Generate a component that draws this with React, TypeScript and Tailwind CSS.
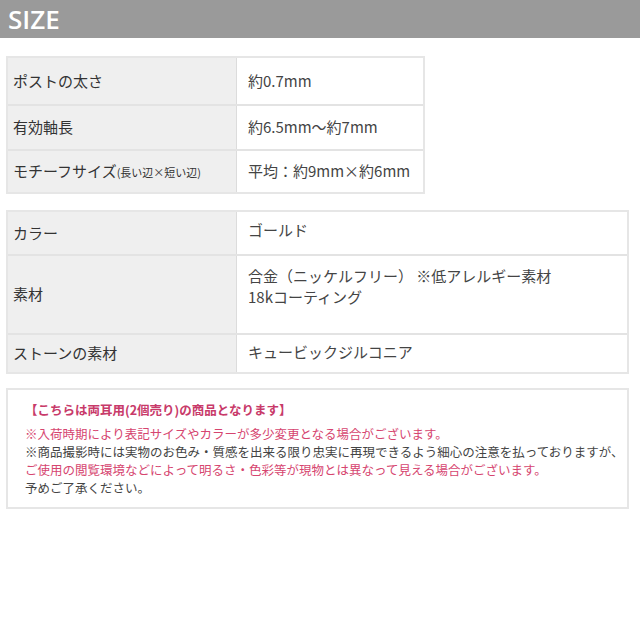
const jp = { fontFamily: '"Noto Sans CJK JP", "Noto Sans", sans-serif' };

type Row = { label: React.ReactNode; value: React.ReactNode; h: string };

function Table({ rows, width }: { rows: Row[]; width: string }) {
  return (
    <div className={`${width} border-2 border-[#e6e6e6]`}>
      {rows.map((r, i) => (
        <div key={i} className={`flex ${r.h} ${i > 0 ? "border-t-2 border-[#e3e3e3]" : ""}`}>
          <div className="w-[229px] shrink-0 bg-[#efefef] border-r border-[#dcdcdc] flex items-center pl-[5px] text-[15px] text-[#333]">
            {r.label}
          </div>
          <div className="flex-1 bg-white flex items-center pl-[11px] text-[15px] text-[#444]">{r.value}</div>
        </div>
      ))}
    </div>
  );
}

export default function App() {
  const t1: Row[] = [
    { label: "ポストの太さ", value: "約0.7mm", h: "h-[46px]" },
    { label: "有効軸長", value: "約6.5mm～約7mm", h: "h-[45px]" },
    {
      label: (
        <span>
          モチーフサイズ<span className="text-[11px]">(長い辺×短い辺)</span>
        </span>
      ),
      value: "平均：約9mm×約6mm",
      h: "h-[43px]",
    },
  ];
  const t2: Row[] = [
    { label: "カラー", value: <span className="-mt-[5px]">ゴールド</span>, h: "h-[42px]" },
    {
      label: "素材",
      value: (
        <div className="leading-[21px] -mt-[18px]">
          <div>合金（ニッケルフリー） ※低アレルギー素材</div>
          <div>18kコーティング</div>
        </div>
      ),
      h: "h-[79px]",
    },
    { label: "ストーンの素材", value: <span className="-mt-[2px]">キュービックジルコニア</span>, h: "h-[39px]" },
  ];
  return (
    <div className="w-[640px] h-[640px] bg-white" style={jp}>
      <div className="h-[38px] bg-[#9a9a9a] flex items-center pl-[8px]">
        <span className="text-white text-[26px] font-semibold" style={{ fontFamily: '"Open Sans", sans-serif' }}>
          SIZE
        </span>
      </div>
      <div className="pl-[6px] pt-[18px] flex flex-col">
        <Table rows={t1} width="w-[419px]" />
        <div className="h-[16px]" />
        <Table rows={t2} width="w-[623px]" />
        <div className="h-[14px]" />
        <div className="w-[623px] border-2 border-[#e6e6e6] pl-[17px] pt-[11px] pb-[10px] text-[12.5px] leading-[18px]">
          <div className="text-[#c83a6a] font-bold mb-[6px]">【こちらは両耳用(2個売り)の商品となります】</div>
          <div className="text-[#d6456f]">※入荷時期により表記サイズやカラーが多少変更となる場合がございます。</div>
          <div className="text-[#444]">※商品撮影時には実物のお色み・質感を出来る限り忠実に再現できるよう細心の注意を払っておりますが、</div>
          <div className="text-[#d6456f]">ご使用の閲覧環境などによって明るさ・色彩等が現物とは異なって見える場合がございます。</div>
          <div className="text-[#444]">予めご了承ください。</div>
        </div>
      </div>
    </div>
  );
}
